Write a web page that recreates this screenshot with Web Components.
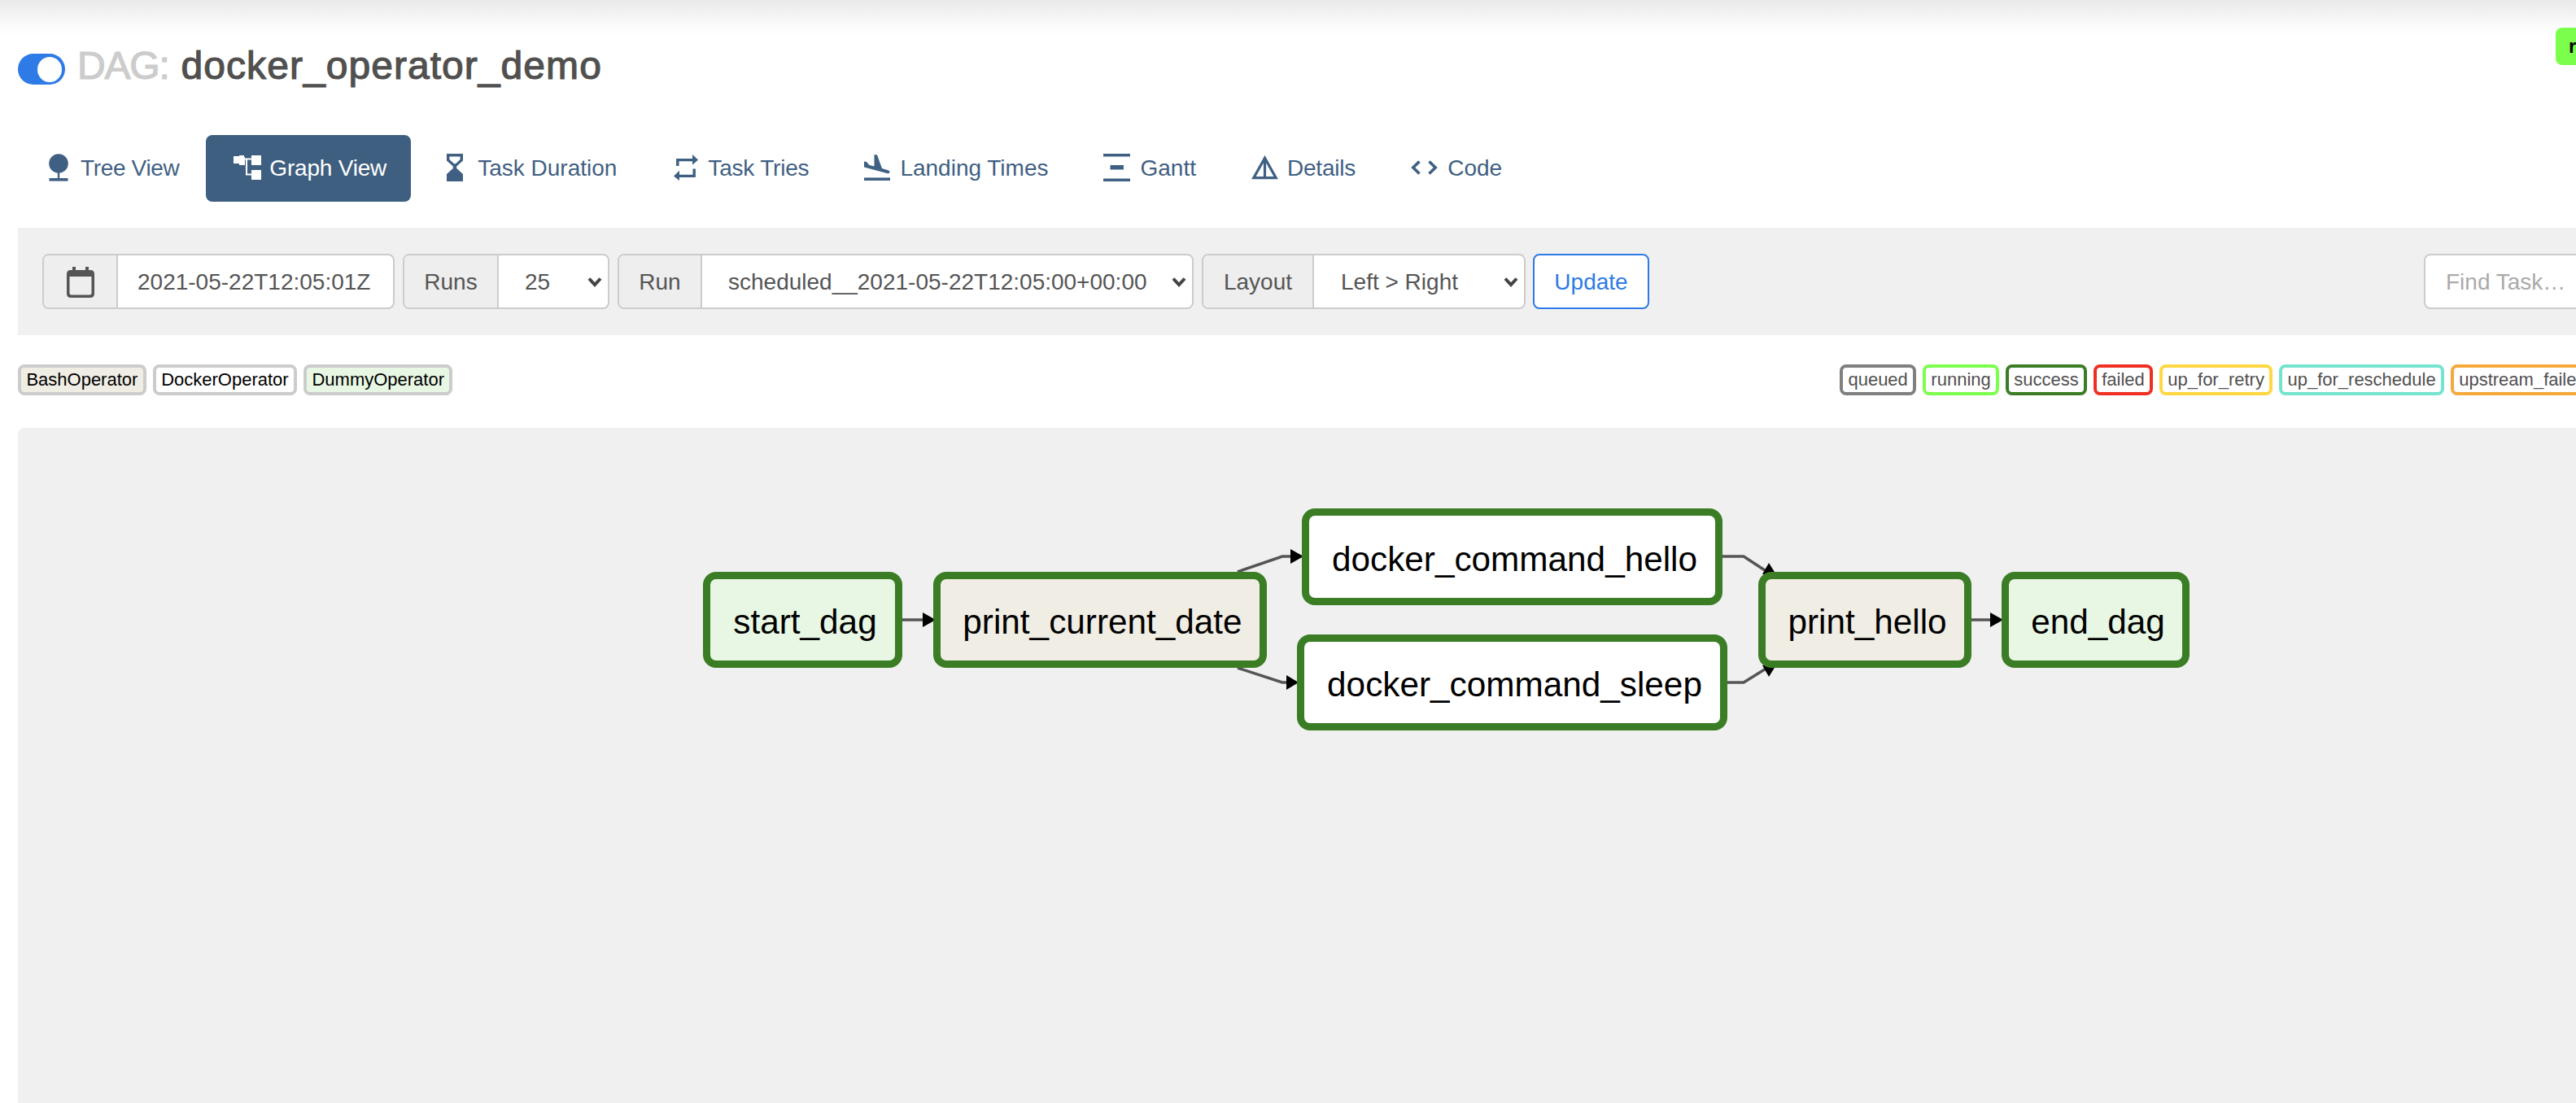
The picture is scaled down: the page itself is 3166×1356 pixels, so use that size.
<!DOCTYPE html>
<html lang="en">
<head>
<meta charset="utf-8">
<title>docker_operator_demo - Graph View</title>
<style>
  html, body { margin: 0; padding: 0; width: 3166px; height: 1356px; overflow: hidden; background: #fff; }
  body { font-family: "Liberation Sans", Arial, sans-serif; }
</style>
</head>
<body>

<dag-page>
  <dag-header slot="header" dag="docker_operator_demo" state="r"></dag-header>

  <dag-nav slot="nav">
    <nav-pill style="--box:47px;margin-right:-1px;letter-spacing:-.35px">
      <svg slot="icon" style="margin-left:8px" width="24" height="34" viewBox="0 0 24 34" fill="currentColor"><circle cx="12" cy="12" r="11.8"/><rect x="10.8" y="22" width="2.4" height="9"/><rect x="0.5" y="30" width="23" height="3.6"/></svg>
      Tree View
    </nav-pill>
    <nav-pill active style="--box:48px;letter-spacing:-.2px">
      <svg slot="icon" style="margin-left:4px" width="34" height="30" viewBox="0 0 34 30" fill="currentColor"><path d="M0 1H7V0H13V2H14V12H7V10H0Z"/><rect x="22" y="0" width="12" height="12"/><rect x="22" y="18" width="12" height="12"/><path d="M13 4.5H22M16 4.5V23.5H22" fill="none" stroke="currentColor" stroke-width="2"/></svg>
      Graph View
    </nav-pill>
    <nav-pill style="--box:48px">
      <svg slot="icon" style="margin-left:10px" width="20" height="34" viewBox="0 0 20 34" fill="currentColor"><path fill-rule="evenodd" d="M0 0H20V8.5L12.2 15.5V18L20 25V34H0V25L7.8 18V15.5L0 8.5ZM3.4 3.4V7L9 12.2H11L16.6 7V3.4Z"/></svg>
      Task Duration
    </nav-pill>
    <nav-pill style="--box:48px;letter-spacing:-.2px">
      <svg slot="icon" style="margin-left:6px" width="30" height="32" viewBox="0 0 30 32" fill="currentColor"><path d="M4.8 14V6.6H24M25.2 17.5V26.4H6" fill="none" stroke="currentColor" stroke-width="3.4"/><path d="M23 0L30 6.6L23 12.8ZM7 19.8L0 26.4L7 32Z"/></svg>
      Task Tries
    </nav-pill>
    <nav-pill style="--box:48px">
      <svg slot="icon" style="margin-left:4px" width="32" height="33" viewBox="0 0 32 33" fill="currentColor"><path d="M0 8.5L3 9L6.5 13L12.5 14.5L12.5 0L16 0.5L22 17L30 19.5Q32.5 21 31 22.5Q30 23.5 28 23L0 15.5Z"/><rect x="0" y="28.4" width="32" height="3.6"/></svg>
      Landing Times
    </nav-pill>
    <nav-pill style="--box:49px">
      <svg slot="icon" style="margin-left:4px" width="33" height="34" viewBox="0 0 33 34" fill="currentColor"><rect width="33" height="3.5"/><rect x="8.5" y="14" width="16.5" height="5.5"/><rect y="30.5" width="33" height="3.5"/></svg>
      Gantt
    </nav-pill>
    <nav-pill style="--box:48px;letter-spacing:-.2px">
      <svg slot="icon" style="margin-left:4px" width="33" height="30" viewBox="0 0 33 30" fill="none" stroke="currentColor" stroke-width="3.2"><path d="M16.5 3.2L2.8 27.6H30.2ZM16.5 3.2V27.6"/></svg>
      Details
    </nav-pill>
    <nav-pill style="--box:49px">
      <svg slot="icon" style="margin-left:4px" width="33" height="18" viewBox="0 0 33 18" fill="none" stroke="currentColor" stroke-width="3.6"><path d="M10.5 1.5L2.8 9L10.5 16.5M22.5 1.5L30.2 9L22.5 16.5"/></svg>
      Code
    </nav-pill>
  </dag-nav>

  <dag-toolbar slot="toolbar">
    <input-group width="433" addon-width="91" pad="24">
      <svg slot="addon" width="34" height="38" viewBox="0 0 34 38" fill="#555"><path fill-rule="evenodd" d="M5 4H7V0H11V4H23V0H27V4H29Q34 4 34 9V33Q34 38 29 38H5Q0 38 0 33V9Q0 4 5 4ZM3.5 12V32Q3.5 34.5 6 34.5H28Q30.5 34.5 30.5 32V12Z"/></svg>
      2021-05-22T12:05:01Z
    </input-group>
    <input-group label="Runs" width="254" addon-width="116" pad="32" select>25</input-group>
    <input-group label="Run" width="708" addon-width="102" pad="32" select>scheduled__2021-05-22T12:05:00+00:00</input-group>
    <input-group label="Layout" width="398" addon-width="136" pad="33" select>Left &gt; Right</input-group>
    <update-button>Update</update-button>
    <find-task>Find Task…</find-task>
  </dag-toolbar>

  <dag-legend slot="legend">
    <legend-chip slot="operators" fill="#f0ede4" line="#ccc">BashOperator</legend-chip>
    <legend-chip slot="operators" fill="#fff" line="#ccc">DockerOperator</legend-chip>
    <legend-chip slot="operators" fill="#e8f7e4" line="#ccc">DummyOperator</legend-chip>
    <legend-chip slot="states" state line="#808080">queued</legend-chip>
    <legend-chip slot="states" state line="#7cff4c">running</legend-chip>
    <legend-chip slot="states" state line="#3a7d24">success</legend-chip>
    <legend-chip slot="states" state line="#ef2f22">failed</legend-chip>
    <legend-chip slot="states" state line="#ffd740">up_for_retry</legend-chip>
    <legend-chip slot="states" state line="#74e3d0">up_for_reschedule</legend-chip>
    <legend-chip slot="states" state line="#f6a93b">upstream_failed</legend-chip>
  </dag-legend>

  <dag-graph slot="graph">
    <dag-node x="864" y="703" w="245" h="118" fill="#e8f7e4">start_dag</dag-node>
    <dag-node x="1147" y="703" w="410" h="118" fill="#f0ede4">print_current_date</dag-node>
    <dag-node x="1600" y="625" w="517" h="119" fill="#fff">docker_command_hello</dag-node>
    <dag-node x="1594" y="780" w="529" h="118" fill="#fff">docker_command_sleep</dag-node>
    <dag-node x="2161" y="703" w="262" h="118" fill="#f0ede4">print_hello</dag-node>
    <dag-node x="2460" y="703" w="231" h="118" fill="#e8f7e4">end_dag</dag-node>
  </dag-graph>
</dag-page>

<script>
class DagPage extends HTMLElement {
  constructor() {
    super();
    this.attachShadow({ mode: "open" }).innerHTML = /*html*/ `
      <style>
        :host { display: block; width: 3166px; height: 1356px; overflow: hidden; position: relative; background: #fff; color: #51504f; }
        .shade { height: 45px; background: linear-gradient(#e9e9e9, #fbfbfb 70%, #fff); }
        .content { display: flex; flex-direction: column; }
      </style>
      <div class="shade"></div>
      <div class="content">
        <slot name="header"></slot>
        <slot name="nav"></slot>
        <slot name="toolbar"></slot>
        <slot name="legend"></slot>
        <slot name="graph"></slot>
      </div>
    `;
  }
}

class DagHeader extends HTMLElement {
  constructor() {
    super();
    const dag = this.getAttribute("dag");
    const state = this.getAttribute("state");
    this.attachShadow({ mode: "open" }).innerHTML = /*html*/ `
      <style>
        :host { display: flex; align-items: center; height: 40px; margin: 20px 0 0 22px; font-size: 48px; }
        .toggle { width: 58px; height: 38px; border-radius: 19px; background: #2e7ae6; position: relative; flex: none; }
        .toggle::after { content: ""; position: absolute; right: 4px; top: 3.5px; width: 30px; height: 31px; border-radius: 50%; background: #fff; }
        h1 { margin: 0 0 9px 15px; font: inherit; line-height: 40px; display: flex; -webkit-text-stroke: 1.2px currentColor; }
        .pre { color: #ccc; letter-spacing: -1.2px; margin-right: 15px; }
        .name { color: #51504f; letter-spacing: 1.05px; }
        .badge { position: absolute; left: 3141px; top: 34px; width: 25px; height: 46px; overflow: hidden; background: #7cff4c; border-radius: 8px 0 0 8px; color: #000; font-size: 24px; font-weight: bold; line-height: 46px; padding-left: 16px; box-sizing: border-box; white-space: nowrap; }
      </style>
      <span class="toggle"></span>
      <h1><span class="pre">DAG:</span><span class="name">${dag}</span></h1>
      <span class="badge">${state}</span>
    `;
  }
}

class DagNav extends HTMLElement {
  constructor() {
    super();
    this.attachShadow({ mode: "open" }).innerHTML = /*html*/ `
      <style>
        :host { display: flex; gap: 4px; margin: 61px 0 0 22px; }
      </style>
      <slot></slot>
    `;
  }
}

class NavPill extends HTMLElement {
  constructor() {
    super();
    this.attachShadow({ mode: "open" }).innerHTML = /*html*/ `
      <style>
        :host { display: flex; align-items: center; height: 82px; padding: 0 30px; box-sizing: border-box; font-size: 28px; color: #3f6083; border-radius: 8px; white-space: nowrap; }
        :host([active]) { background: #3f5f80; color: #fff; }
        .icon { width: var(--box, 48px); flex: none; display: flex; align-items: center; margin-top: -2px; }
        ::slotted(svg) { display: block; }
      </style>
      <span class="icon"><slot name="icon"></slot></span>
      <slot></slot>
    `;
  }
}

class DagToolbar extends HTMLElement {
  constructor() {
    super();
    this.attachShadow({ mode: "open" }).innerHTML = /*html*/ `
      <style>
        :host { display: flex; gap: 10px; align-items: flex-start; height: 132px; padding: 32px 0 0 30px; box-sizing: border-box; margin: 32px 0 0 22px; background: #f0f0f0; }
      </style>
      <slot></slot>
    `;
  }
}

class InputGroup extends HTMLElement {
  constructor() {
    super();
    const label = this.getAttribute("label") || "";
    const width = this.getAttribute("width");
    const addonWidth = this.getAttribute("addon-width");
    const pad = this.getAttribute("pad");
    const chevron = this.hasAttribute("select")
      ? `<svg class="chevron" width="18" height="13" viewBox="0 0 18 13"><path d="M2 2.5L9 10L16 2.5" fill="none" stroke="#444" stroke-width="4"/></svg>`
      : "";
    this.attachShadow({ mode: "open" }).innerHTML = /*html*/ `
      <style>
        :host { display: flex; flex: none; width: ${width}px; height: 68px; box-sizing: border-box; border: 2px solid #ccc; border-radius: 8px; overflow: hidden; background: #fff; font-size: 28px; color: #555; white-space: nowrap; }
        .addon { width: ${addonWidth}px; flex: none; box-sizing: border-box; display: flex; align-items: center; justify-content: center; background: #eee; border-right: 2px solid #ccc; padding-top: 1px; }
        .value { flex: 1; display: flex; align-items: center; justify-content: space-between; padding: 1px 7px 0 ${pad}px; }
        .chevron { display: block; }
      </style>
      <span class="addon"><slot name="addon">${label}</slot></span>
      <span class="value"><span><slot></slot></span>${chevron}</span>
    `;
  }
}

class UpdateButton extends HTMLElement {
  constructor() {
    super();
    this.attachShadow({ mode: "open" }).innerHTML = /*html*/ `
      <style>
        :host { display: flex; align-items: center; justify-content: center; flex: none; width: 143px; height: 68px; box-sizing: border-box; margin-left: -1px; padding-top: 1px; border: 2px solid #2e7ae6; border-radius: 8px; background: #fff; color: #2e7ae6; font-size: 28px; }
      </style>
      <slot></slot>
    `;
  }
}

class FindTask extends HTMLElement {
  constructor() {
    super();
    this.attachShadow({ mode: "open" }).innerHTML = /*html*/ `
      <style>
        :host { display: flex; align-items: center; flex: none; width: 300px; height: 68px; box-sizing: border-box; margin-left: 942px; padding: 1px 0 0 25px; border: 2px solid #ccc; border-radius: 8px; background: #fff; color: #aaa; font-size: 28px; white-space: nowrap; }
      </style>
      <slot></slot>
    `;
  }
}

class DagLegend extends HTMLElement {
  constructor() {
    super();
    this.attachShadow({ mode: "open" }).innerHTML = /*html*/ `
      <style>
        :host { display: flex; margin: 36px 0 0 22px; height: 38px; }
        .group { display: flex; gap: 8px; flex: none; }
        .states { margin-left: 1705px; gap: 8.5px; }
      </style>
      <div class="group"><slot name="operators"></slot></div>
      <div class="group states"><slot name="states"></slot></div>
    `;
  }
}

class LegendChip extends HTMLElement {
  constructor() {
    super();
    const fill = this.getAttribute("fill") || "#fff";
    const line = this.getAttribute("line");
    const isState = this.hasAttribute("state");
    this.attachShadow({ mode: "open" }).innerHTML = /*html*/ `
      <style>
        :host { display: flex; align-items: center; flex: none; height: 38px; box-sizing: border-box; padding: 0 ${isState ? 6 : 6.4}px; border: 4px solid ${line}; border-radius: 8px; background: ${fill}; color: ${isState ? "#51504f" : "#000"}; font-size: 22px; white-space: nowrap; }
      </style>
      <slot></slot>
    `;
  }
}

class DagGraph extends HTMLElement {
  constructor() {
    super();
    // viewBox starts at the panel's page offset, so edges read in page coordinates
    this.attachShadow({ mode: "open" }).innerHTML = /*html*/ `
      <style>
        :host { display: block; position: relative; height: 830px; margin: 40px 0 0 22px; background: #f0f0f0; border-radius: 8px 0 0 0; }
        svg { position: absolute; left: 0; top: 0; }
      </style>
      <svg width="3144" height="830" viewBox="22 526 3144 830">
        <g fill="none" stroke="#555" stroke-width="3.5">
          <path d="M1105 762H1136"/>
          <path d="M1521 703L1576 684H1590"/>
          <path d="M1521 821L1576 839H1585"/>
          <path d="M2115 684H2143L2172 703"/>
          <path d="M2121 839H2143L2172 821"/>
          <path d="M2420 762H2450"/>
        </g>
        <g fill="#000">
          <path d="M1134 753L1150 762L1134 771Z"/>
          <path d="M1586 675L1602 684L1586 693Z"/>
          <path d="M1581 830L1596 839L1581 848Z"/>
          <path d="M2174 692L2184 708L2166 706Z"/>
          <path d="M2174 832L2184 816L2166 818Z"/>
          <path d="M2446 753L2462 762L2446 771Z"/>
        </g>
      </svg>
      <slot></slot>
    `;
  }
}

class DagNode extends HTMLElement {
  constructor() {
    super();
    const left = this.getAttribute("x") - 22;
    const top = this.getAttribute("y") - 526;
    this.attachShadow({ mode: "open" }).innerHTML = /*html*/ `
      <style>
        :host { position: absolute; left: ${left}px; top: ${top}px; width: ${this.getAttribute("w")}px; height: ${this.getAttribute("h")}px; box-sizing: border-box; display: flex; align-items: center; justify-content: center; padding: 6px 0 0 6px; border: 9px solid #3a7d24; border-radius: 16px; background: ${this.getAttribute("fill")}; color: #000; font-size: 42.3px; white-space: nowrap; }
      </style>
      <slot></slot>
    `;
  }
}

customElements.define("dag-page", DagPage);
customElements.define("dag-header", DagHeader);
customElements.define("dag-nav", DagNav);
customElements.define("nav-pill", NavPill);
customElements.define("dag-toolbar", DagToolbar);
customElements.define("input-group", InputGroup);
customElements.define("update-button", UpdateButton);
customElements.define("find-task", FindTask);
customElements.define("dag-legend", DagLegend);
customElements.define("legend-chip", LegendChip);
customElements.define("dag-graph", DagGraph);
customElements.define("dag-node", DagNode);
</script>
</body>
</html>
